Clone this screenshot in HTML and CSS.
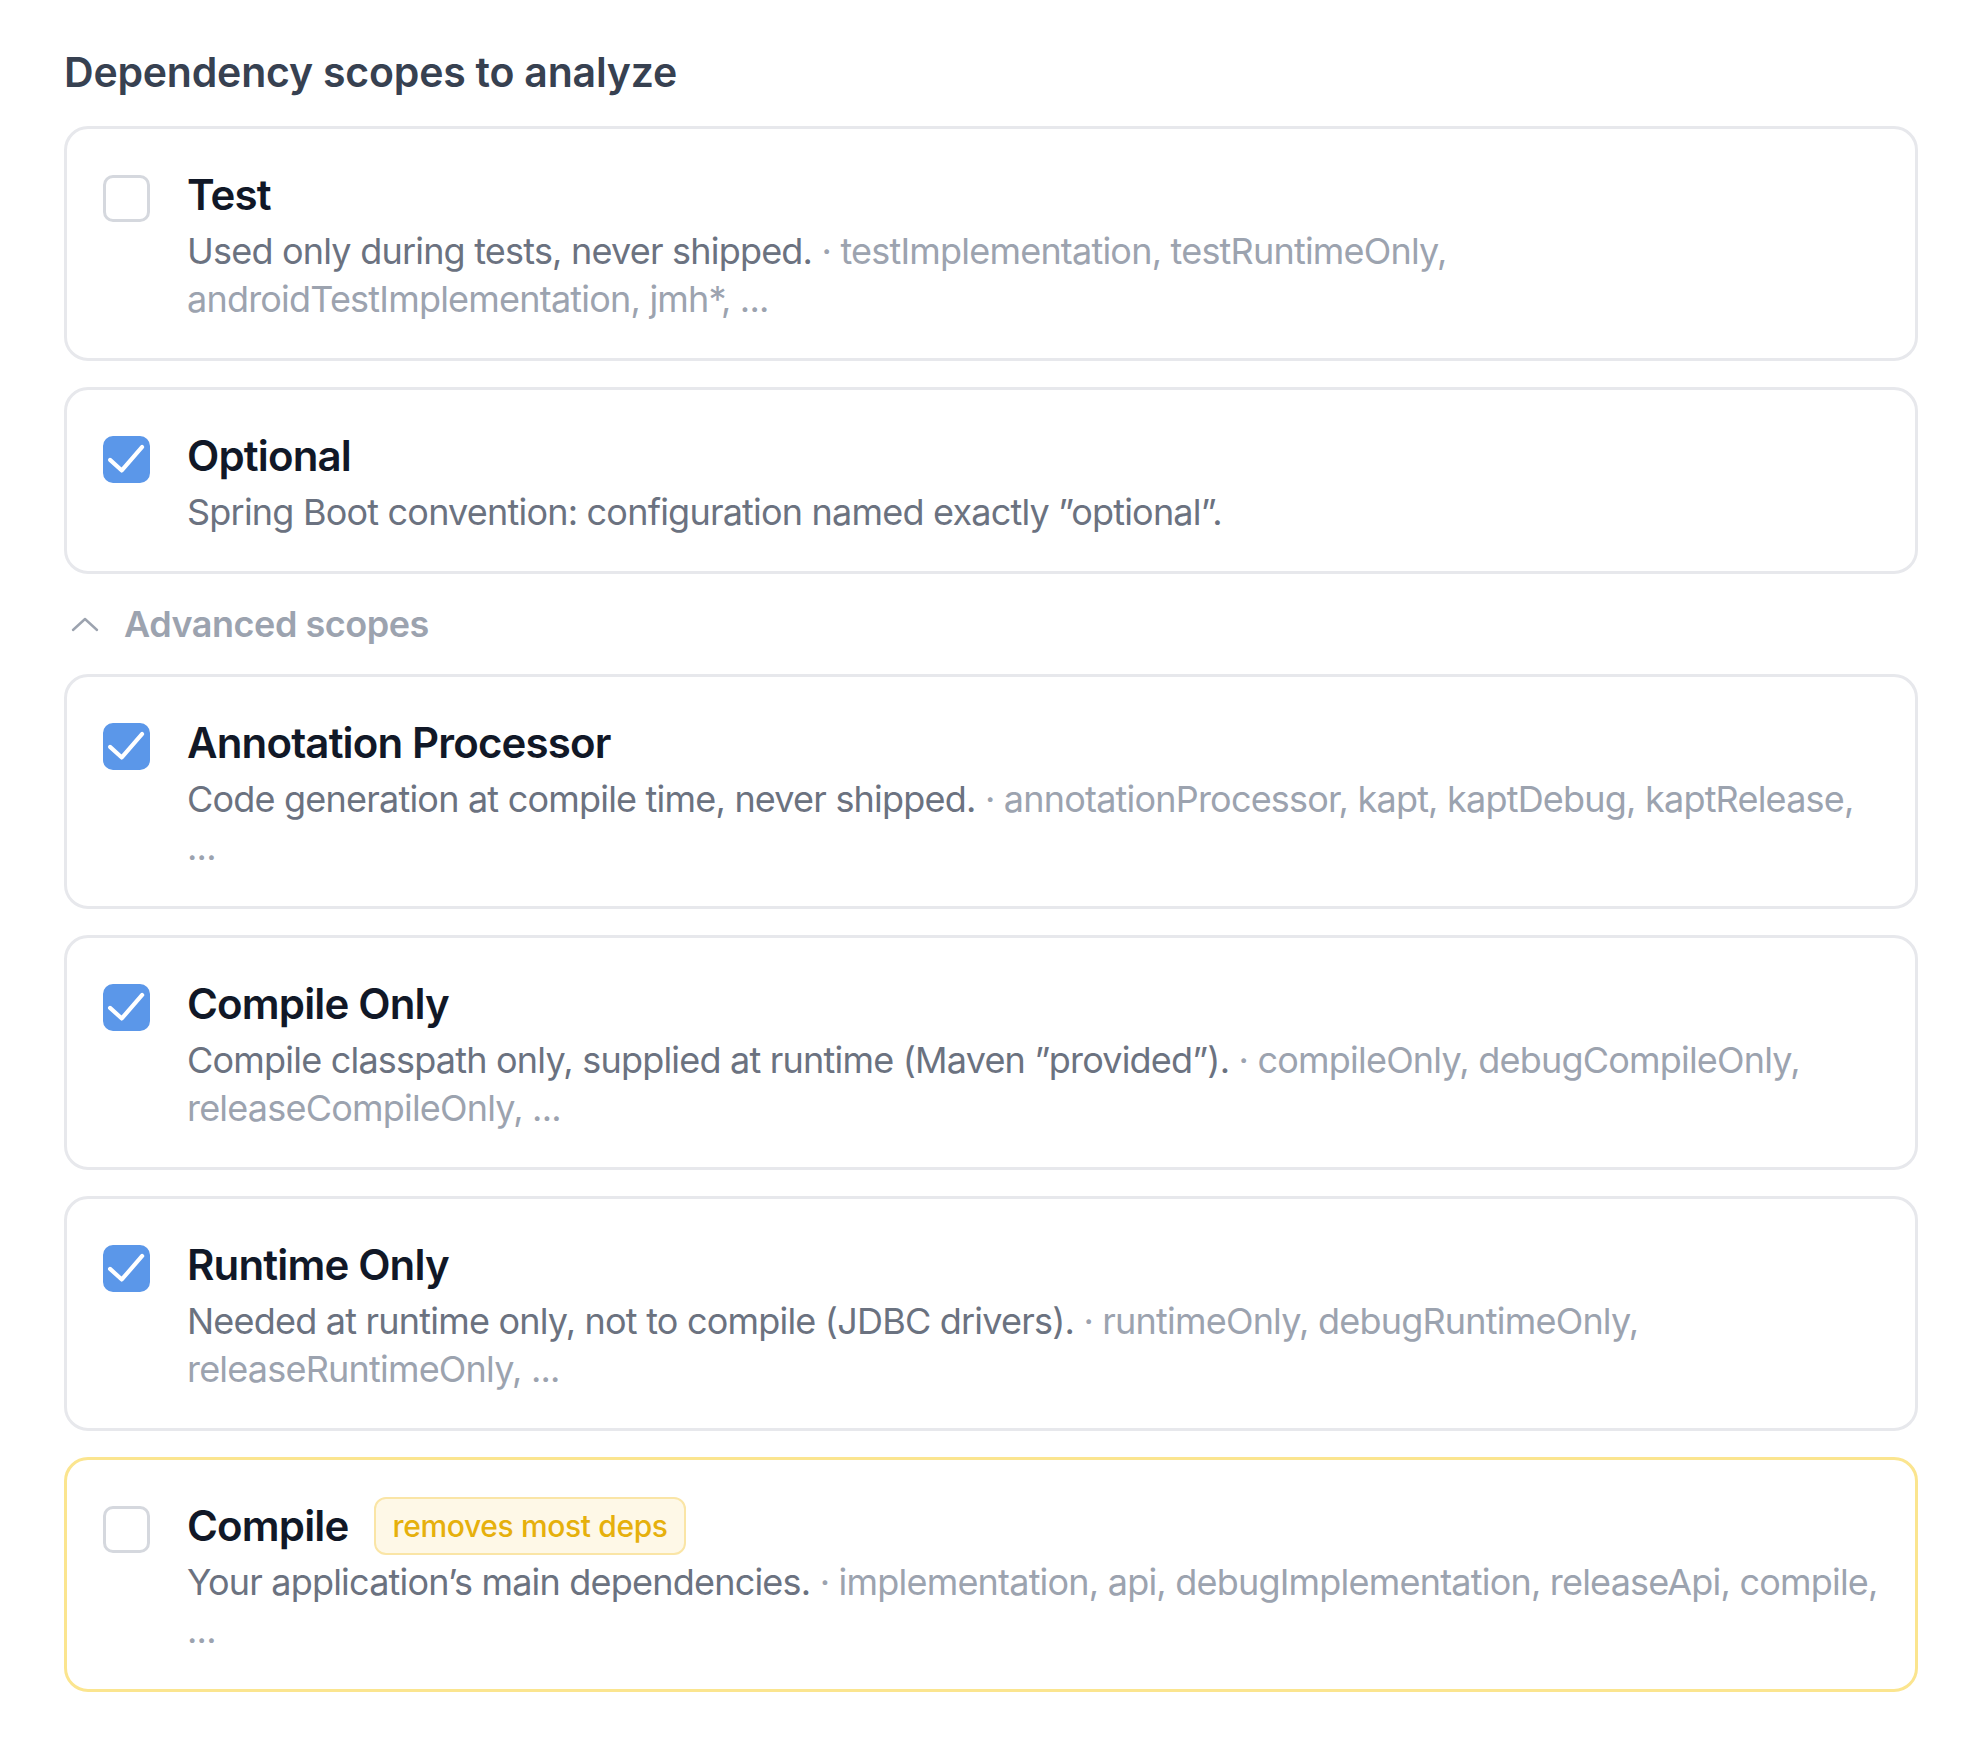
FILE: index.html
```html
<!DOCTYPE html>
<html lang="en">
<head>
<meta charset="utf-8">
<title>Dependency scopes</title>
<link rel="stylesheet" href="styles.css">
</head>
<body>
<main class="page">
  <h2 class="heading">Dependency scopes to analyze</h2>
  <div class="list">
    <label class="card">
      <span class="box"></span>
      <div class="body">
        <div class="title-row"><span class="title">Test</span></div>
        <p class="desc"><span class="main">Used only during tests, never shipped.</span><span class="alias"> · testImplementation, testRuntimeOnly, androidTestImplementation, jmh*, ...</span></p>
      </div>
    </label>
    <label class="card">
      <span class="box checked"><svg viewBox="0 0 24 24" class="check"><path d="M3.6 12.2 9.6 17.6 20 5.6"/></svg></span>
      <div class="body">
        <div class="title-row"><span class="title">Optional</span></div>
        <p class="desc"><span class="main">Spring Boot convention: configuration named exactly ”optional”.</span></p>
      </div>
    </label>
    <div class="toggle">
      <svg class="chevron" viewBox="0 0 28 16"><polyline points="2,14 14,3 26,14"/></svg>
      <span class="toggle-label">Advanced scopes</span>
    </div>
    <label class="card">
      <span class="box checked"><svg viewBox="0 0 24 24" class="check"><path d="M3.6 12.2 9.6 17.6 20 5.6"/></svg></span>
      <div class="body">
        <div class="title-row"><span class="title">Annotation Processor</span></div>
        <p class="desc"><span class="main">Code generation at compile time, never shipped.</span><span class="alias"> · annotationProcessor, kapt, kaptDebug, kaptRelease, ...</span></p>
      </div>
    </label>
    <label class="card">
      <span class="box checked"><svg viewBox="0 0 24 24" class="check"><path d="M3.6 12.2 9.6 17.6 20 5.6"/></svg></span>
      <div class="body">
        <div class="title-row"><span class="title">Compile Only</span></div>
        <p class="desc"><span class="main">Compile classpath only, supplied at runtime (Maven ”provided”).</span><span class="alias"> · compileOnly, debugCompileOnly, releaseCompileOnly, ...</span></p>
      </div>
    </label>
    <label class="card">
      <span class="box checked"><svg viewBox="0 0 24 24" class="check"><path d="M3.6 12.2 9.6 17.6 20 5.6"/></svg></span>
      <div class="body">
        <div class="title-row"><span class="title">Runtime Only</span></div>
        <p class="desc"><span class="main">Needed at runtime only, not to compile (JDBC drivers).</span><span class="alias"> · runtimeOnly, debugRuntimeOnly, releaseRuntimeOnly, ...</span></p>
      </div>
    </label>
    <label class="card card-warn">
      <span class="box"></span>
      <div class="body">
        <div class="title-row"><span class="title">Compile</span><span class="badge">removes most deps</span></div>
        <p class="desc"><span class="main">Your application’s main dependencies.</span><span class="alias"> · implementation, api, debugImplementation, releaseApi, compile, ...</span></p>
      </div>
    </label>
  </div>
</main>
</body>
</html>
```
FILE: styles.css
```css
* { box-sizing: border-box; }
html, body { margin: 0; background: #ffffff; }
body { font-family: "Inter", "Noto Sans", sans-serif; }

.page {
  padding: 48px 64px 0 64px;
}

.heading {
  margin: 0 0 30px 0;
  font-size: 41px;
  line-height: 48px;
  font-weight: 600;
  letter-spacing: -0.005em;
  color: #374151;
}

.list {
  display: flex;
  flex-direction: column;
  gap: 26px;
}

.card {
  display: flex;
  align-items: flex-start;
  gap: 37px;
  border: 3px solid #e7e8ec;
  border-radius: 24px;
  padding: 38px 29px 35px 36px;
  background: #fff;
}
.card-warn { border-color: #fbe58f; }

.box {
  flex: 0 0 47px;
  width: 47px;
  height: 47px;
  margin-top: 8px;
  border: 3px solid #d5d8de;
  border-radius: 10px;
  display: flex;
  align-items: center;
  justify-content: center;
}
.box.checked {
  background: #5b97e9;
  border-color: #5b97e9;
}
.check {
  width: 47px;
  height: 47px;
  flex: none;
  fill: none;
  stroke: #fff;
  stroke-width: 2.1;
  stroke-linecap: round;
  stroke-linejoin: round;
}

.body { flex: 1; min-width: 0; }

.title-row {
  display: flex;
  align-items: center;
  gap: 26px;
  height: 56px;
}
.title {
  font-size: 42px;
  line-height: 56px;
  font-weight: 600;
  letter-spacing: -0.02em;
  color: #111827;
}
.badge {
  font-size: 30px;
  line-height: 40px;
  font-weight: 500;
  letter-spacing: -0.012em;
  color: #e6b00c;
  background: #fef8e7;
  border: 2px solid #fae5a6;
  border-radius: 12px;
  padding: 7px 16px;
}

.desc {
  margin: 4px 0 0 0;
  font-size: 36px;
  line-height: 48px;
  font-weight: 400;
  letter-spacing: -0.022em;
}
.main { color: #6b7280; }
.alias { color: #9ca3af; }

.toggle {
  display: flex;
  align-items: center;
  gap: 25px;
  height: 48px;
  padding-left: 7px;
}
.chevron {
  width: 28px;
  height: 16px;
  fill: none;
  stroke: #9ca3af;
  stroke-width: 2.4;
  stroke-linecap: round;
  stroke-linejoin: round;
}
.toggle-label {
  font-size: 36px;
  line-height: 48px;
  font-weight: 600;
  letter-spacing: -0.013em;
  color: #9ca3af;
}
```
